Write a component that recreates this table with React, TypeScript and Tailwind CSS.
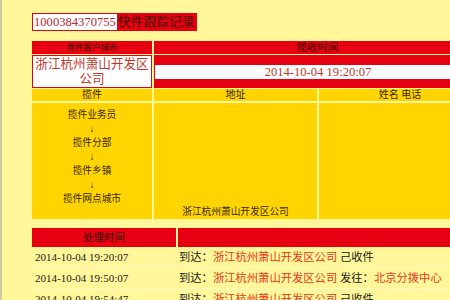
import React from 'react';

const FONT = { fontFamily: '"Liberation Serif", "Noto Sans CJK SC", serif' };

const CHAIN = ['揽件业务员', '揽件分部', '揽件乡镇', '揽件网点城市'];

const LOGS = [
  { time: '2014-10-04 19:20:07', verb: '到达：', place: '浙江杭州萧山开发区公司', tail: '己收件' },
  { time: '2014-10-04 19:50:07', verb: '发往：', place: '', tail: '', dest: '北京分拨中心', pre: '浙江杭州萧山开发区公司' },
  { time: '2014-10-04 19:54:47', verb: '到达：', place: '浙江杭州萧山开发区公司', tail: '己收件' },
];

export default function App() {
  return (
    <div
      style={FONT}
      className="w-[450px] h-[300px] overflow-hidden bg-[#fff799] border-l-2 border-[#cfc9a0] pl-[30px] pt-[13px]"
    >
      {/* title */}
      <div className="flex w-fit items-center whitespace-nowrap h-[18px] bg-[#e60012] pr-[2px]">
        <div className="ml-px h-[16px] bg-white px-px text-[12.6px] leading-[16px] text-[#b8282d]">1000384370755</div>
        <div className="pl-px text-[12.8px] leading-[16px] text-[#4a0000]">快件跟踪记录</div>
      </div>

      {/* sender / pickup time */}
      <div className="mt-[10px] grid w-[449px] grid-cols-[120px_327px] gap-x-[2px] gap-y-px">
        <div className="h-[13px] bg-[#e60012] text-center text-[8.5px] leading-[13px] text-[#3a0000]">发件客户城市</div>
        <div className="h-[13px] bg-[#e60012] text-center text-[10.4px] leading-[13px] text-[#3a0000]">揽收时间</div>
        <div className="h-[33px] bg-[#e60012] p-px">
          <div className="flex h-full flex-col items-center justify-center bg-white text-[12.6px] leading-[15px] text-[#c0392b]">
            <span>浙江杭州萧山开发区</span>
            <span>公司</span>
          </div>
        </div>
        <div className="flex h-[33px] items-center bg-[#e60012] pl-px">
          <div className="h-[14px] w-full bg-white text-center text-[12.6px] leading-[14px] text-[#c0392b]">2014-10-04 19:20:07</div>
        </div>
      </div>

      {/* pickup chain */}
      <div className="mt-px grid w-[449px] grid-cols-[120px_163px_162px] gap-[2px] text-[#3a2a00]">
        <div className="h-[12px] bg-[#ffd400] text-center text-[10px] leading-[12px]">揽件</div>
        <div className="h-[12px] bg-[#ffd400] text-center text-[10px] leading-[12px]">地址</div>
        <div className="h-[12px] bg-[#ffd400] text-center text-[10px] leading-[12px]">姓名 电话</div>
        <div className="flex h-[116px] flex-col items-center bg-[#ffd400] pt-[5px] text-[9.7px] leading-[14px]">
          {CHAIN.map((c, i) => (
            <React.Fragment key={c}>
              {i > 0 && <span className="text-[10px]">↓</span>}
              <span>{c}</span>
            </React.Fragment>
          ))}
        </div>
        <div className="flex h-[116px] items-end justify-center bg-[#ffd400] text-[9.7px] leading-[14px]">浙江杭州萧山开发区公司</div>
        <div className="h-[116px] bg-[#ffd400]" />
      </div>

      {/* process log */}
      <div className="mt-[9px] grid w-[449px] grid-cols-[144px_303px] gap-x-[2px]">
        <div className="h-[19px] bg-[#e60012] text-center text-[10.4px] leading-[19px] text-[#3a0000]">处理时间</div>
        <div className="h-[19px] bg-[#e60012]" />
        {LOGS.map((l, i) => (
          <React.Fragment key={i}>
            <div className="h-[21px] border-b border-[#fffbc4] pl-[3px] text-[11px] leading-[21px] text-[#1a1a1a]">{l.time}</div>
            <div className="h-[21px] whitespace-nowrap border-b border-[#fffbc4] pl-px text-[11.3px] leading-[21px] text-[#1a1a1a]">
              {l.dest ? (
                <>
                  <span>到达：</span>
                  <span className="text-[#e8341c]">{l.pre}</span>
                  <span> 发往：</span>
                  <span className="text-[#e8341c]">{l.dest}</span>
                </>
              ) : (
                <>
                  <span>{l.verb}</span>
                  <span className="text-[#e8341c]">{l.place}</span>
                  <span> {l.tail}</span>
                </>
              )}
            </div>
          </React.Fragment>
        ))}
      </div>
    </div>
  );
}
